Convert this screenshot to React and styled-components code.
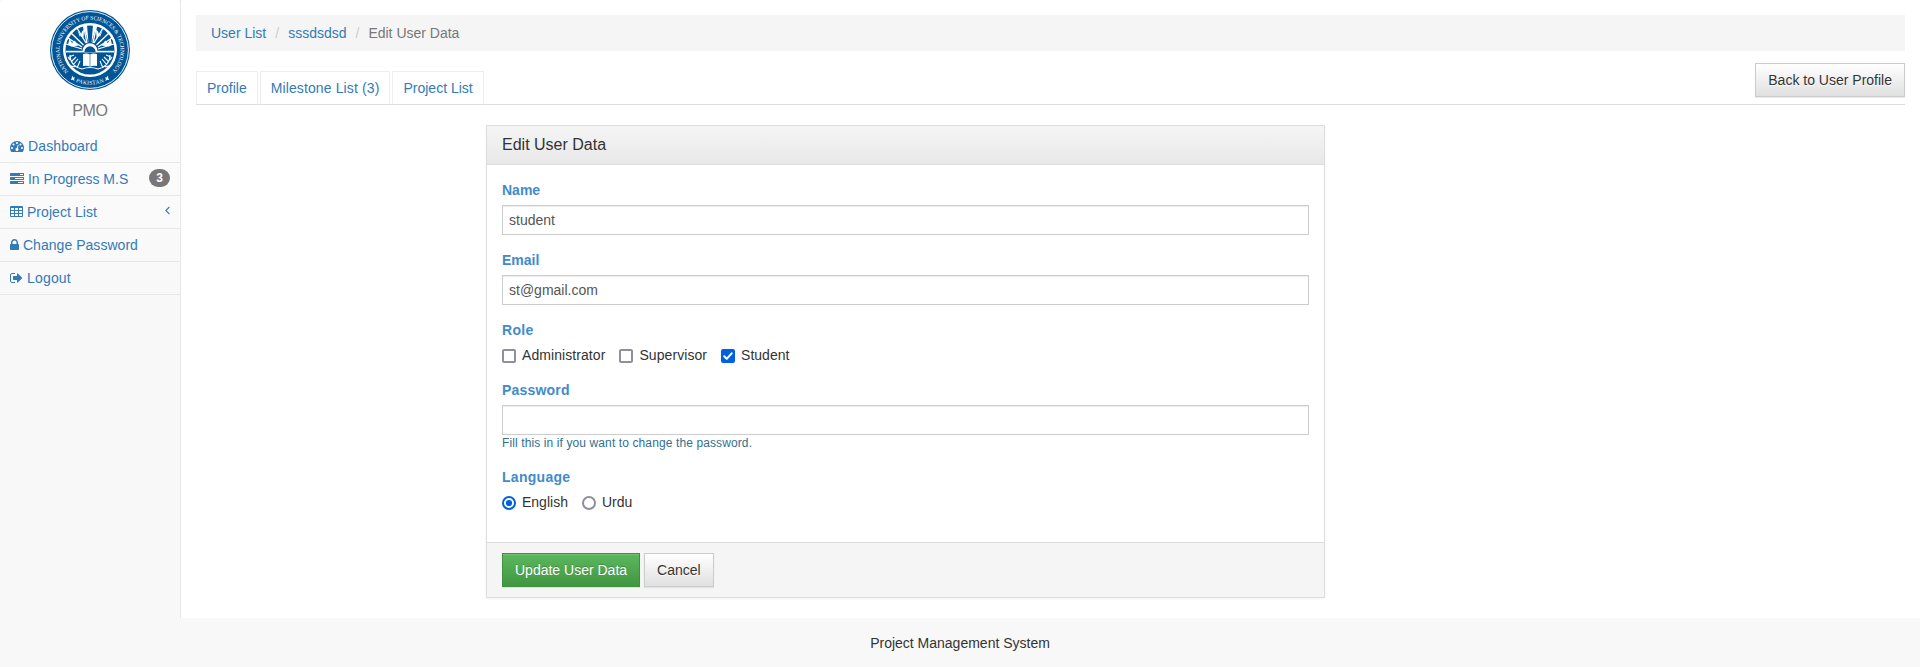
import React from "react";
import styled, { createGlobalStyle, css } from "styled-components";

const GlobalStyle = createGlobalStyle`
  *, *::before, *::after { box-sizing: border-box; }
  body {
    margin: 0;
    background: #f8f8f8;
    color: #333;
    font: 14px/20px "Liberation Sans", Arial, sans-serif;
  }
  a { color: #337ab7; text-decoration: none; }
`;

const Page = styled.div`
  display: flex;
  flex-direction: column;
  min-height: 667px;
`;
const Body = styled.div`
  display: flex;
  height: 618px;
`;
const Sidebar = styled.aside`
  width: 181px;
  flex: none;
  border-right: 1px solid #e7e7e7;
`;
const SideNav = styled.nav`
  background: linear-gradient(to bottom, #fff 0%, #f8f8f8 100%);
  border-radius: 4px;
`;
const Brand = styled.div`
  display: flex;
  flex-direction: column;
  align-items: center;
  height: 130px;
  padding-top: 10px;
  color: #777;
  font-size: 16px;
  letter-spacing: -0.3px;
  svg { display: block; margin-bottom: 11px; }
`;
const NavItem = styled.a`
  display: flex;
  justify-content: space-between;
  height: 33px;
  padding: 6px 10px;
  border-bottom: 1px solid #e7e7e7;
  white-space: nowrap;
`;
const NavText = styled.span`
  letter-spacing: ${(p) => p.$tracking || 0}px;
`;
const Glyph = styled.svg`
  height: 14px;
  fill: currentColor;
  vertical-align: -2px;
`;
const Badge = styled.span`
  height: 18px;
  min-width: 21px;
  padding: 3px 7px;
  border-radius: 10px;
  background: #777;
  color: #fff;
  font-size: 12px;
  font-weight: 700;
  line-height: 12px;
  text-align: center;
`;
const Chevron = styled.svg`
  width: 5px;
  height: 9px;
  margin-top: 4px;
  fill: none;
  stroke: currentColor;
  stroke-width: 1.2;
`;

const Main = styled.main`
  flex: 1;
  padding: 15px;
  background: #fff;
`;
const Breadcrumb = styled.div`
  display: flex;
  height: 36px;
  padding: 8px 15px;
  background: #f5f5f5;
  color: #777;
`;
const Slash = styled.span`
  color: #ccc;
  white-space: pre;
  padding: 0 9px;
`;
const TabBar = styled.div`
  display: flex;
  justify-content: space-between;
  align-items: flex-start;
  height: 42px;
  margin-top: 12px;
  border-bottom: 1px solid #ddd;
`;
const Tabs = styled.div`
  display: flex;
  gap: 2px;
  margin-top: 8px;
`;
const Tab = styled.a`
  height: 34px;
  padding: 6px 10px;
  border: 1px solid #eee;
  border-bottom-color: #ddd;
  letter-spacing: ${(p) => p.$tracking || 0}px;
`;

const Button = styled.button`
  height: 34px;
  padding: 6px 12px;
  border: 1px solid #ccc;
  border-radius: 0;
  font: inherit;
  color: #333;
  background: linear-gradient(to bottom, #fff 0%, #e0e0e0 100%);
  text-shadow: 0 1px 0 #fff;
  box-shadow: inset 0 1px 0 rgba(255, 255, 255, 0.15), 0 1px 1px rgba(0, 0, 0, 0.075);
  ${(p) => p.$primary && css`
    border-color: #3e8f3e;
    color: #fff;
    background: linear-gradient(to bottom, #5cb85c 0%, #419641 100%);
    text-shadow: 0 -1px 0 rgba(0, 0, 0, 0.2);
  `}
`;

const Panel = styled.section`
  width: 839px;
  margin: 20px 0 0 290px;
  border: 1px solid #ddd;
  box-shadow: 0 1px 2px rgba(0, 0, 0, 0.05);
`;
const PanelHeader = styled.header`
  height: 39px;
  padding: 9px 15px;
  border-bottom: 1px solid #ddd;
  background: linear-gradient(to bottom, #f5f5f5 0%, #e8e8e8 100%);
  font-size: 16px;
`;
const PanelBody = styled.div`
  height: 377px;
  padding: 15px;
`;
const PanelFooter = styled.footer`
  display: flex;
  gap: 4px;
  padding: 10px 15px;
  border-top: 1px solid #ddd;
  background: #f5f5f5;
`;
const Field = styled.div`
  margin-bottom: 15px;
`;
const Label = styled.div`
  margin-bottom: 5px;
  color: #428bca;
  font-weight: 700;
  letter-spacing: ${(p) => p.$tracking || 0}px;
`;
const Input = styled.input`
  display: block;
  width: 100%;
  height: 30px;
  padding: 5px 6px;
  border: 1px solid #ccc;
  border-radius: 0;
  outline: none;
  background: #fff;
  color: #555;
  font: inherit;
  box-shadow: inset 0 1px 1px rgba(0, 0, 0, 0.075);
`;
const Hint = styled.div`
  height: 17px;
  color: #31708f;
  font-size: 12px;
  line-height: 17px;
  letter-spacing: 0.11px;
`;
const Options = styled.div`
  display: flex;
  gap: 14px;
`;
const Option = styled.label`
  display: flex;
  gap: 6px;
  letter-spacing: ${(p) => p.$tracking || 0}px;
`;
const Mark = styled.svg`
  width: 14px;
  height: 14px;
  margin-top: 4px;
`;
const Footer = styled.footer`
  flex: 1;
  padding-top: 15px;
  background: #f8f8f8;
  text-align: center;
`;

const CELL = "v-192q0-14-9-23t-23-9h-320q-14 0-23 9t-9 23v192q0 14 9 23t23 9h320q14 0 23-9t9-23z";
const cells = [608, 992, 1376].flatMap((y) => [576, 1088, 1600].map((x) => `M${x} ${y}${CELL}`)).join("");

const icons = {
  dashboard: [14, "0 0 1792 1792", "M384 1152q0-53-37.5-90.5t-90.5-37.5-90.5 37.5-37.5 90.5 37.5 90.5 90.5 37.5 90.5-37.5 37.5-90.5zm192-448q0-53-37.5-90.5t-90.5-37.5-90.5 37.5-37.5 90.5 37.5 90.5 90.5 37.5 90.5-37.5 37.5-90.5zm428 481l101-382q6-26-7.5-48.5t-38.5-29.5-48 6.5-30 39.5l-101 382q-60 5-107 43.5t-63 98.5q-20 77 20 146t117 89 146-20 89-117q16-60-6-117t-72-91zm660-33q0-53-37.5-90.5t-90.5-37.5-90.5 37.5-37.5 90.5 37.5 90.5 90.5 37.5 90.5-37.5 37.5-90.5zm-640-640q0-53-37.5-90.5t-90.5-37.5-90.5 37.5-37.5 90.5 37.5 90.5 90.5 37.5 90.5-37.5 37.5-90.5zm448 192q0-53-37.5-90.5t-90.5-37.5-90.5 37.5-37.5 90.5 37.5 90.5 90.5 37.5 90.5-37.5 37.5-90.5zm320 448q0 261-141 483-19 29-54 29h-1402q-35 0-54-29-141-221-141-483 0-182 71-348t191-286 286-191 348-71 348 71 286 191 191 286 71 348z"],
  tasks: [14, "0 0 1792 1792", "M1024 1408h640v-128h-640v128zm-384-512h1024v-128h-1024v128zm640-512h384v-128h-384v128zm512 832v256q0 26-19 45t-45 19h-1664q-26 0-45-19t-19-45v-256q0-26 19-45t45-19h1664q26 0 45 19t19 45zm0-512v256q0 26-19 45t-45 19h-1664q-26 0-45-19t-19-45v-256q0-26 19-45t45-19h1664q26 0 45 19t19 45zm0-512v256q0 26-19 45t-45 19h-1664q-26 0-45-19t-19-45v-256q0-26 19-45t45-19h1664q26 0 45 19t19 45z"],
  table: [13, "64 0 1664 1792", `${cells}M1728 288v1088q0 66-47 113t-113 47h-1344q-66 0-113-47t-47-113v-1088q0-66 47-113t113-47h1344q66 0 113 47t47 113z`],
  lock: [9, "320 0 1152 1792", "M640 768h512v-192q0-106-75-181t-181-75-181 75-75 181v192zm832 96v576q0 40-28 68t-68 28h-960q-40 0-68-28t-28-68v-576q0-40 28-68t68-28h32v-192q0-184 132-316t316-132 316 132 132 316v192h32q40 0 68 28t28 68z"],
  logout: [13, "64 0 1664 1792", "M704 1440q0 4 1 20t.5 26.5-3 23.5-10 19.5-20.5 6.5h-320q-119 0-203.5-84.5t-84.5-203.5v-704q0-119 84.5-203.5t203.5-84.5h320q13 0 22.5 9.5t9.5 22.5q0 4 1 20t.5 26.5-3 23.5-10 19.5-20.5 6.5h-320q-66 0-113 47t-47 113v704q0 66 47 113t113 47h312l11.5 1 11.5 3 8 5.5 7 9 2 13.5zm928-544q0 26-19 45l-544 544q-19 19-45 19t-45-19-19-45v-288h-448q-26 0-45-19t-19-45v-384q0-26 19-45t45-19h448v-288q0-26 19-45t45-19 45 19l544 544q19 19 19 45z"],
};

function Icon({ name }) {
  const [width, viewBox, d] = icons[name];
  return <Glyph width={width} height="14" viewBox={viewBox}><path fillRule="evenodd" d={d} /></Glyph>;
}

function Crest() {
  const blue = "#005596";
  return (
    <svg width="80" height="80" viewBox="-40 -40 80 80">
      <defs>
        <path id="ring-top" d="M-21.5 21.5 A30.4 30.4 0 1 1 21.5 21.5" />
        <path id="ring-bottom" d="M-24 25 A34.6 34.6 0 0 0 24 25" />
      </defs>
      <circle r="40" fill={blue} />
      <circle r="38.4" fill="none" stroke="#fff" strokeWidth="0.9" />
      <circle r="27" fill="#fff" />
      <circle r="24.5" fill={blue} />
      <g fill="#fff" fontFamily="Liberation Serif, serif" fontSize="5.6" letterSpacing="0">
        <text><textPath href="#ring-top" textLength="142" lengthAdjust="spacing">NATIONAL UNIVERSITY OF SCIENCES &amp; TECHNOLOGY</textPath></text>
        <text textAnchor="middle" letterSpacing="0.3"><textPath href="#ring-bottom" startOffset="50%">PAKISTAN</textPath></text>
        <path d="M-18 25.5l1.3 2 1.7-.2-.9 1.6.4 2-1.8-1.2-1.9.2 1-1.8zM18 25.5l-1.3 2-1.7-.2.9 1.6-.4 2 1.8-1.2 1.9.2-1-1.8z" />
      </g>
      <g fill="none" stroke="#fff" strokeWidth="1.3">
        <path d="M-3 -7L-6.5-24M3-7L6.5-24M-6.5-5L-19-17M6.5-5L19-17M-8-1L-24-6M8-1L24-6M-4-7L-13-22M4-7L13-22M-8-3L-22-12M8-3L22-12" />
      </g>
      <g fill="#fff">
        <path d="M-1.5-7L-6.5-24.5 -3-25zM1.5-7L6.5-24.5 3-25z" />
        <path d="M-12.5-19.5l2.5 6.5 2-5.5 2-2-.6 10zM12.5-19.5l-2.5 6.5-2-5.5-2-2 .6 10z" />
        <path d="M-20.5-11.5l2.5 4.5 3-2.5 1.5 3.5 2.5 1.5-8 1-3-2zM20.5-11.5l-2.5 4.5-3-2.5-1.5 3.5-2.5 1.5 8 1 3-2z" />
        <path d="M-7.5 1A7.5 7.8 0 0 1 7.5 1z" />
        <rect x="-24" y="0.8" width="48" height="1.6" />
      </g>
      <path d="M-5.6 2A5.6 5.8 0 0 1 5.6 2z" fill={blue} />
      <path d="M-7 4q4-1.2 7 .5 3-1.7 7-.5v12q-4-1-7 .7-3-1.7-7-.7z" fill="#fff" />
      <path d="M0 4.5v12" stroke={blue} strokeWidth="0.6" />
      <g fill="none" stroke="#fff" strokeWidth="1.1">
        <path d="M-20 5q0 11 12 14M-21 7l5-2M-19 12l5-5M-17 15l5-6M-13 18l3-7M-20 10l-2-3M-15 17l-4-1" />
        <path d="M20 5q0 11-12 14M21 7l-5-2M19 12l-5-5M17 15l-5-6M13 18l-3-7M20 10l2-3M15 17l4-1M-8 19q8-3 16 0" />
      </g>
    </svg>
  );
}

function CheckMark({ checked }) {
  return (
    <Mark viewBox="0 0 14 14">
      {checked ? (
        <>
          <rect width="14" height="14" rx="2" fill="#0060df" />
          <path d="M3.2 7.3l2.5 2.5 5-5.5" fill="none" stroke="#fff" strokeWidth="2" strokeLinecap="round" strokeLinejoin="round" />
        </>
      ) : (
        <rect x="1" y="1" width="12" height="12" rx="1" fill="#fff" stroke="#8f8f9d" strokeWidth="2" />
      )}
    </Mark>
  );
}

function RadioMark({ checked }) {
  const color = checked ? "#0060df" : "#8f8f9d";
  return (
    <Mark viewBox="0 0 14 14">
      <circle cx="7" cy="7" r="6" fill="#fff" stroke={color} strokeWidth="2" />
      {checked && <circle cx="7" cy="7" r="3.1" fill={color} />}
    </Mark>
  );
}

const navItems = [
  { icon: "dashboard", label: "Dashboard", tracking: 0.13 },
  { icon: "tasks", label: "In Progress M.S", badge: 3 },
  { icon: "table", label: "Project List", expandable: true, tracking: 0.06 },
  { icon: "lock", label: "Change Password", tracking: 0.04 },
  { icon: "logout", label: "Logout", tracking: 0.16 },
];

export default function App() {
  return (
    <Page>
      <GlobalStyle />
      <Body>
        <Sidebar>
          <SideNav>
            <Brand><Crest />PMO</Brand>
            {navItems.map((item) => (
              <NavItem key={item.label} href="#">
                <NavText $tracking={item.tracking}><Icon name={item.icon} /> {item.label}</NavText>
                {item.badge && <Badge>{item.badge}</Badge>}
                {item.expandable && <Chevron viewBox="0 0 5 9"><path d="M4.4 .8L.9 4.5l3.5 3.7" /></Chevron>}
              </NavItem>
            ))}
          </SideNav>
        </Sidebar>
        <Main>
          <Breadcrumb>
            <a href="#">User List</a><Slash>/</Slash>
            <a href="#">sssdsdsd</a><Slash>/</Slash>
            <span>Edit User Data</span>
          </Breadcrumb>
          <TabBar>
            <Tabs>
              <Tab href="#">Profile</Tab>
              <Tab href="#" $tracking={0.12}>Milestone List (3)</Tab>
              <Tab href="#">Project List</Tab>
            </Tabs>
            <Button>Back to User Profile</Button>
          </TabBar>
          <Panel>
            <PanelHeader>Edit User Data</PanelHeader>
            <PanelBody>
              <Field><Label>Name</Label><Input defaultValue="student" /></Field>
              <Field><Label>Email</Label><Input defaultValue="st@gmail.com" /></Field>
              <Field>
                <Label $tracking={0.3}>Role</Label>
                <Options>
                  <Option $tracking={0.07}><CheckMark />Administrator</Option>
                  <Option $tracking={0.08}><CheckMark />Supervisor</Option>
                  <Option><CheckMark checked />Student</Option>
                </Options>
              </Field>
              <Field>
                <Label $tracking={0.2}>Password</Label>
                <Input type="password" />
                <Hint>Fill this in if you want to change the password.</Hint>
              </Field>
              <Field>
                <Label $tracking={0.28}>Language</Label>
                <Options>
                  <Option><RadioMark checked />English</Option>
                  <Option><RadioMark />Urdu</Option>
                </Options>
              </Field>
            </PanelBody>
            <PanelFooter>
              <Button $primary>Update User Data</Button>
              <Button>Cancel</Button>
            </PanelFooter>
          </Panel>
        </Main>
      </Body>
      <Footer>Project Management System</Footer>
    </Page>
  );
}
